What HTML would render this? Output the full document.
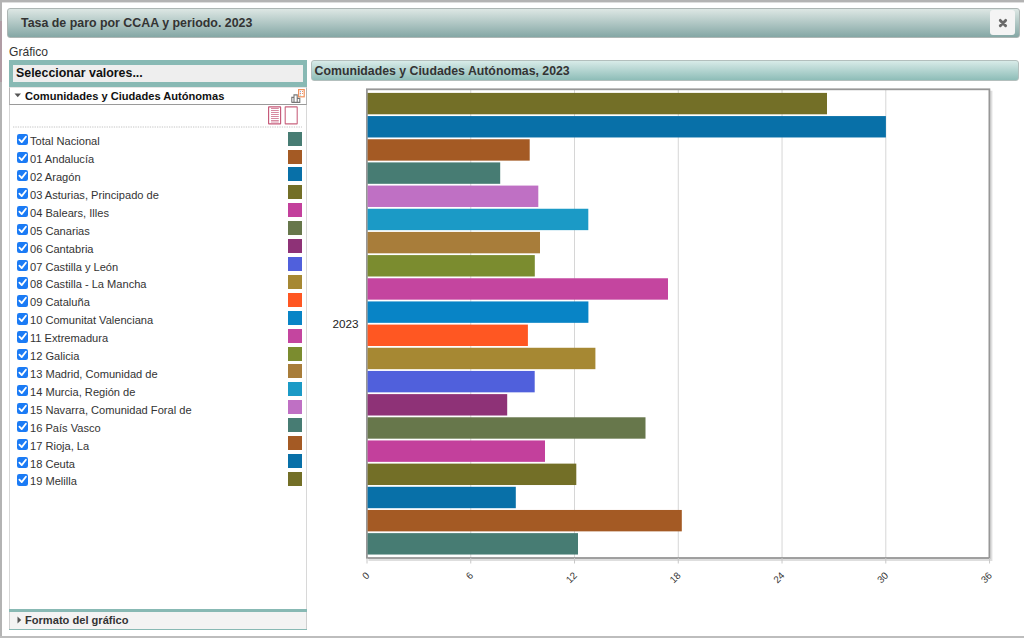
<!DOCTYPE html>
<html><head><meta charset="utf-8">
<style>
*{box-sizing:border-box}
html,body{margin:0;padding:0;width:1024px;height:638px;overflow:hidden;background:#fff;font-family:"Liberation Sans",sans-serif;color:#333}
.a{position:absolute}
#frameT{left:0;top:0;width:1024px;height:3px;background:linear-gradient(#b3b3b3 0,#b3b3b3 2px,#dedede 2px)}
#frameL{left:0;top:0;width:2px;height:638px;background:#b3b3b3}
#frameLp{left:0;top:21px;width:2px;height:61px;background:#b09ca4}
#frameB{left:0;top:636px;width:1024px;height:2px;background:#bdbdbd}
#title{left:7px;top:8px;width:1013px;height:30px;border:1px solid #adb6b4;border-radius:3px;background:linear-gradient(#dde7e4,#84a7a5)}
#titleTxt{left:21px;top:15.5px;font-size:12.4px;font-weight:bold;color:#333;white-space:nowrap}
#close{left:990px;top:10px;width:25px;height:25px;background:#f4f4f4;border-radius:3px}
#grafico{left:9px;top:45px;font-size:12.1px;color:#333}
#selBox{left:9px;top:60px;width:298px;height:27px;background:#88b9b4}
#selIn{left:13px;top:65px;width:290px;height:17px;background:#eeeeee}
#selTxt{left:16px;top:66px;font-size:12.4px;font-weight:bold;color:#111}
#panel{left:9px;top:87px;width:298px;height:522px;border-left:1px solid #d8d8d8;border-right:1px solid #d8d8d8}
#hdr{left:9px;top:87px;width:298px;height:18px;border:1px solid #b5b5b5;border-top-color:#e6e6e6;border-bottom:1.5px solid #9a9a9a}
#hdrTxt{left:25px;top:90px;font-size:11.1px;font-weight:bold;color:#111;white-space:nowrap}
#dots{left:13px;top:126px;width:289px;height:1px;border-top:1px dotted #aaa}
.row{position:absolute;left:17px;height:18px;font-size:11.1px;color:#333;white-space:nowrap}
.cb{position:absolute;left:0;top:0;width:11.3px;height:11.3px;border-radius:2.2px;background:#1b7bf5}
.cb svg{position:absolute;left:0;top:0}
.lbl{position:absolute;left:13px;top:1px}
.sw{position:absolute;left:288px;width:14px;height:14px}
#fmtTop{left:9px;top:609px;width:298px;height:3px;background:#88b9b4}
#fmt{left:9px;top:612px;width:298px;height:17px;background:#f3f3f3;border-left:1px solid #cfcfcf;border-right:1px solid #cfcfcf}
#fmtBot{left:9px;top:629px;width:298px;height:1.3px;background:#88b9b4}
#fmtTxt{left:25px;top:614px;font-size:11.1px;font-weight:bold;color:#333;white-space:nowrap}
#ctitle{left:311px;top:60px;width:708px;height:21px;border:1px solid #b3bfbd;border-radius:3px;background:linear-gradient(#d8ebe8,#8ebdb8)}
#ctitleTxt{left:314.6px;top:64px;font-size:12.3px;font-weight:bold;color:#333;white-space:nowrap}
.xl{font-size:9.5px;color:#333;text-align:right;transform:rotate(-45deg);transform-origin:100% 0}
</style></head><body>
<div class="a" id="frameT"></div>
<div class="a" id="frameL"></div>
<div class="a" id="frameLp"></div>
<div class="a" id="frameB"></div>

<div class="a" id="title"></div>
<div class="a" id="titleTxt">Tasa de paro por CCAA y periodo. 2023</div>
<div class="a" id="close"><svg width="25" height="25"><path d="M10.3 10.4L15.6 15.8M15.6 10.4L10.3 15.8" stroke="#6a6a6a" stroke-width="2.9" stroke-linecap="round"/></svg></div>

<div class="a" id="grafico">Gráfico</div>

<div class="a" id="selBox"></div>
<div class="a" id="selIn"></div>
<div class="a" id="selTxt">Seleccionar valores...</div>

<div class="a" id="panel"></div>
<div class="a" id="hdr"></div>
<svg class="a" style="left:14px;top:93px" width="8" height="5"><path d="M0.5 0.5H7L3.75 4.2Z" fill="#555"/></svg>
<div class="a" id="hdrTxt">Comunidades y Ciudades Autónomas</div>

<svg class="a" style="left:13px;top:126px" width="290" height="2"><line x1="0" y1="1" x2="289" y2="1" stroke="#c4c4c4" stroke-width="1" stroke-dasharray="1.3 1.1"/></svg>

<div class="row" style="top:134.20px"><div class="cb"><svg width="11" height="11"><path d="M2.4 5.7L4.7 8.1L8.9 2.7" stroke="#fff" stroke-width="1.8" fill="none" stroke-linecap="round" stroke-linejoin="round"/></svg></div><span class="lbl">Total Nacional</span></div>
<div class="sw" style="top:131.60px;background:#477c73"></div>
<div class="row" style="top:152.11px"><div class="cb"><svg width="11" height="11"><path d="M2.4 5.7L4.7 8.1L8.9 2.7" stroke="#fff" stroke-width="1.8" fill="none" stroke-linecap="round" stroke-linejoin="round"/></svg></div><span class="lbl">01 Andalucía</span></div>
<div class="sw" style="top:149.51px;background:#a45a24"></div>
<div class="row" style="top:170.02px"><div class="cb"><svg width="11" height="11"><path d="M2.4 5.7L4.7 8.1L8.9 2.7" stroke="#fff" stroke-width="1.8" fill="none" stroke-linecap="round" stroke-linejoin="round"/></svg></div><span class="lbl">02 Aragón</span></div>
<div class="sw" style="top:167.42px;background:#0870a8"></div>
<div class="row" style="top:187.93px"><div class="cb"><svg width="11" height="11"><path d="M2.4 5.7L4.7 8.1L8.9 2.7" stroke="#fff" stroke-width="1.8" fill="none" stroke-linecap="round" stroke-linejoin="round"/></svg></div><span class="lbl">03 Asturias, Principado de</span></div>
<div class="sw" style="top:185.33px;background:#736f27"></div>
<div class="row" style="top:205.84px"><div class="cb"><svg width="11" height="11"><path d="M2.4 5.7L4.7 8.1L8.9 2.7" stroke="#fff" stroke-width="1.8" fill="none" stroke-linecap="round" stroke-linejoin="round"/></svg></div><span class="lbl">04 Balears, Illes</span></div>
<div class="sw" style="top:203.24px;background:#c3409c"></div>
<div class="row" style="top:223.75px"><div class="cb"><svg width="11" height="11"><path d="M2.4 5.7L4.7 8.1L8.9 2.7" stroke="#fff" stroke-width="1.8" fill="none" stroke-linecap="round" stroke-linejoin="round"/></svg></div><span class="lbl">05 Canarias</span></div>
<div class="sw" style="top:221.15px;background:#67774b"></div>
<div class="row" style="top:241.66px"><div class="cb"><svg width="11" height="11"><path d="M2.4 5.7L4.7 8.1L8.9 2.7" stroke="#fff" stroke-width="1.8" fill="none" stroke-linecap="round" stroke-linejoin="round"/></svg></div><span class="lbl">06 Cantabria</span></div>
<div class="sw" style="top:239.06px;background:#8e3277"></div>
<div class="row" style="top:259.57px"><div class="cb"><svg width="11" height="11"><path d="M2.4 5.7L4.7 8.1L8.9 2.7" stroke="#fff" stroke-width="1.8" fill="none" stroke-linecap="round" stroke-linejoin="round"/></svg></div><span class="lbl">07 Castilla y León</span></div>
<div class="sw" style="top:256.97px;background:#5060dc"></div>
<div class="row" style="top:277.48px"><div class="cb"><svg width="11" height="11"><path d="M2.4 5.7L4.7 8.1L8.9 2.7" stroke="#fff" stroke-width="1.8" fill="none" stroke-linecap="round" stroke-linejoin="round"/></svg></div><span class="lbl">08 Castilla - La Mancha</span></div>
<div class="sw" style="top:274.88px;background:#a68833"></div>
<div class="row" style="top:295.39px"><div class="cb"><svg width="11" height="11"><path d="M2.4 5.7L4.7 8.1L8.9 2.7" stroke="#fff" stroke-width="1.8" fill="none" stroke-linecap="round" stroke-linejoin="round"/></svg></div><span class="lbl">09 Cataluña</span></div>
<div class="sw" style="top:292.79px;background:#ff5722"></div>
<div class="row" style="top:313.30px"><div class="cb"><svg width="11" height="11"><path d="M2.4 5.7L4.7 8.1L8.9 2.7" stroke="#fff" stroke-width="1.8" fill="none" stroke-linecap="round" stroke-linejoin="round"/></svg></div><span class="lbl">10 Comunitat Valenciana</span></div>
<div class="sw" style="top:310.70px;background:#0884c6"></div>
<div class="row" style="top:331.21px"><div class="cb"><svg width="11" height="11"><path d="M2.4 5.7L4.7 8.1L8.9 2.7" stroke="#fff" stroke-width="1.8" fill="none" stroke-linecap="round" stroke-linejoin="round"/></svg></div><span class="lbl">11 Extremadura</span></div>
<div class="sw" style="top:328.61px;background:#c4459f"></div>
<div class="row" style="top:349.12px"><div class="cb"><svg width="11" height="11"><path d="M2.4 5.7L4.7 8.1L8.9 2.7" stroke="#fff" stroke-width="1.8" fill="none" stroke-linecap="round" stroke-linejoin="round"/></svg></div><span class="lbl">12 Galicia</span></div>
<div class="sw" style="top:346.52px;background:#7b8c2f"></div>
<div class="row" style="top:367.03px"><div class="cb"><svg width="11" height="11"><path d="M2.4 5.7L4.7 8.1L8.9 2.7" stroke="#fff" stroke-width="1.8" fill="none" stroke-linecap="round" stroke-linejoin="round"/></svg></div><span class="lbl">13 Madrid, Comunidad de</span></div>
<div class="sw" style="top:364.43px;background:#a87d3a"></div>
<div class="row" style="top:384.94px"><div class="cb"><svg width="11" height="11"><path d="M2.4 5.7L4.7 8.1L8.9 2.7" stroke="#fff" stroke-width="1.8" fill="none" stroke-linecap="round" stroke-linejoin="round"/></svg></div><span class="lbl">14 Murcia, Región de</span></div>
<div class="sw" style="top:382.34px;background:#1b9ac6"></div>
<div class="row" style="top:402.85px"><div class="cb"><svg width="11" height="11"><path d="M2.4 5.7L4.7 8.1L8.9 2.7" stroke="#fff" stroke-width="1.8" fill="none" stroke-linecap="round" stroke-linejoin="round"/></svg></div><span class="lbl">15 Navarra, Comunidad Foral de</span></div>
<div class="sw" style="top:400.25px;background:#bf70c4"></div>
<div class="row" style="top:420.76px"><div class="cb"><svg width="11" height="11"><path d="M2.4 5.7L4.7 8.1L8.9 2.7" stroke="#fff" stroke-width="1.8" fill="none" stroke-linecap="round" stroke-linejoin="round"/></svg></div><span class="lbl">16 País Vasco</span></div>
<div class="sw" style="top:418.16px;background:#477c73"></div>
<div class="row" style="top:438.67px"><div class="cb"><svg width="11" height="11"><path d="M2.4 5.7L4.7 8.1L8.9 2.7" stroke="#fff" stroke-width="1.8" fill="none" stroke-linecap="round" stroke-linejoin="round"/></svg></div><span class="lbl">17 Rioja, La</span></div>
<div class="sw" style="top:436.07px;background:#a45a24"></div>
<div class="row" style="top:456.58px"><div class="cb"><svg width="11" height="11"><path d="M2.4 5.7L4.7 8.1L8.9 2.7" stroke="#fff" stroke-width="1.8" fill="none" stroke-linecap="round" stroke-linejoin="round"/></svg></div><span class="lbl">18 Ceuta</span></div>
<div class="sw" style="top:453.98px;background:#0870a8"></div>
<div class="row" style="top:474.49px"><div class="cb"><svg width="11" height="11"><path d="M2.4 5.7L4.7 8.1L8.9 2.7" stroke="#fff" stroke-width="1.8" fill="none" stroke-linecap="round" stroke-linejoin="round"/></svg></div><span class="lbl">19 Melilla</span></div>
<div class="sw" style="top:471.89px;background:#736f27"></div>
<svg class="a" style="left:288px;top:87px" width="20" height="18">
<path d="M3.8 15.4V10.4H6M6 15.4V7.9H9.2V15.4M9.2 11.4H11.8V15.4H3.6" stroke="#777" stroke-width="1.1" fill="none"/>
<rect x="10.6" y="2.6" width="5.6" height="7.2" fill="#fff" stroke="#f0915c" stroke-width="1.2"/>
<circle cx="12.4" cy="4.6" r="0.6" fill="#6a9fd8"/><circle cx="12.4" cy="6.4" r="0.6" fill="#e07a7a"/><circle cx="12.4" cy="8.1" r="0.6" fill="#8fd0c8"/>
<rect x="14" y="4" width="1" height="1" fill="#f0915c"/><rect x="14" y="6" width="1" height="1" fill="#f0915c"/>
</svg>
<svg class="a" style="left:266px;top:105px" width="34" height="21">
<rect x="2.6" y="1.9" width="12" height="17" rx="0.3" fill="#fff" stroke="#c55878" stroke-width="1.15"/>
<path d="M5 3.5H12.8M5 5.5H12.8M5 7.5H12.8M5 9.5H12.8M5 11.5H12.8M5 13.5H12.8M5 15.5H12.8M5 17H12.8" stroke="#d27d96" stroke-width="0.9"/>
<rect x="19.2" y="1.9" width="12" height="17" rx="0.3" fill="#fff" stroke="#c9647f" stroke-width="1.1"/>
</svg>

<div class="a" id="fmtTop"></div>
<div class="a" id="fmt"></div>
<div class="a" id="fmtBot"></div>
<svg class="a" style="left:17px;top:616px" width="5" height="8"><path d="M0.5 0.5V7.5L4.2 4Z" fill="#555"/></svg>
<div class="a" id="fmtTxt">Formato del gráfico</div>

<div class="a" id="ctitle"></div>
<div class="a" id="ctitleTxt">Comunidades y Ciudades Autónomas, 2023</div>

<svg class="a" style="left:0;top:0" width="1024" height="638">
<path d="M368.4 559.5H990.9V90.8" stroke="rgba(0,0,0,0.13)" stroke-width="3" fill="none"/>
<line x1="470.76" y1="89.3" x2="470.76" y2="558.0" stroke="#d6d6d6" stroke-width="1"/>
<line x1="574.52" y1="89.3" x2="574.52" y2="558.0" stroke="#d6d6d6" stroke-width="1"/>
<line x1="678.28" y1="89.3" x2="678.28" y2="558.0" stroke="#d6d6d6" stroke-width="1"/>
<line x1="782.04" y1="89.3" x2="782.04" y2="558.0" stroke="#d6d6d6" stroke-width="1"/>
<line x1="885.80" y1="89.3" x2="885.80" y2="558.0" stroke="#d6d6d6" stroke-width="1"/>
<rect x="366.9" y="89.3" width="622.50" height="468.70" fill="none" stroke="#979797" stroke-width="1.8"/>
<rect x="367.6" y="92.90" width="459.40" height="21.4" fill="#736f27"/>
<rect x="367.6" y="116.07" width="518.30" height="21.4" fill="#0870a8"/>
<rect x="367.6" y="139.24" width="162.10" height="21.4" fill="#a45a24"/>
<rect x="367.6" y="162.41" width="132.60" height="21.4" fill="#477c73"/>
<rect x="367.6" y="185.58" width="170.70" height="21.4" fill="#bf70c4"/>
<rect x="367.6" y="208.75" width="220.70" height="21.4" fill="#1b9ac6"/>
<rect x="367.6" y="231.92" width="172.40" height="21.4" fill="#a87d3a"/>
<rect x="367.6" y="255.09" width="167.20" height="21.4" fill="#7b8c2f"/>
<rect x="367.6" y="278.26" width="300.40" height="21.4" fill="#c4459f"/>
<rect x="367.6" y="301.43" width="220.80" height="21.4" fill="#0884c6"/>
<rect x="367.6" y="324.60" width="160.30" height="21.4" fill="#ff5722"/>
<rect x="367.6" y="347.77" width="227.80" height="21.4" fill="#a68833"/>
<rect x="367.6" y="370.94" width="167.10" height="21.4" fill="#5060dc"/>
<rect x="367.6" y="394.11" width="139.60" height="21.4" fill="#8e3277"/>
<rect x="367.6" y="417.28" width="277.90" height="21.4" fill="#67774b"/>
<rect x="367.6" y="440.45" width="177.40" height="21.4" fill="#c3409c"/>
<rect x="367.6" y="463.62" width="208.70" height="21.4" fill="#736f27"/>
<rect x="367.6" y="486.79" width="148.20" height="21.4" fill="#0870a8"/>
<rect x="367.6" y="509.96" width="314.20" height="21.4" fill="#a45a24"/>
<rect x="367.6" y="533.13" width="210.40" height="21.4" fill="#477c73"/>
<line x1="367.00" y1="558.0" x2="367.00" y2="563.5" stroke="#c8c8c8" stroke-width="1"/>
<text transform="translate(367.60,573.6) rotate(-45)" text-anchor="end" dominant-baseline="central" font-family="Liberation Sans" font-size="9.8" fill="#333">0</text>
<line x1="470.76" y1="558.0" x2="470.76" y2="563.5" stroke="#c8c8c8" stroke-width="1"/>
<text transform="translate(471.36,573.6) rotate(-45)" text-anchor="end" dominant-baseline="central" font-family="Liberation Sans" font-size="9.8" fill="#333">6</text>
<line x1="574.52" y1="558.0" x2="574.52" y2="563.5" stroke="#c8c8c8" stroke-width="1"/>
<text transform="translate(575.12,573.6) rotate(-45)" text-anchor="end" dominant-baseline="central" font-family="Liberation Sans" font-size="9.8" fill="#333">12</text>
<line x1="678.28" y1="558.0" x2="678.28" y2="563.5" stroke="#c8c8c8" stroke-width="1"/>
<text transform="translate(678.88,573.6) rotate(-45)" text-anchor="end" dominant-baseline="central" font-family="Liberation Sans" font-size="9.8" fill="#333">18</text>
<line x1="782.04" y1="558.0" x2="782.04" y2="563.5" stroke="#c8c8c8" stroke-width="1"/>
<text transform="translate(782.64,573.6) rotate(-45)" text-anchor="end" dominant-baseline="central" font-family="Liberation Sans" font-size="9.8" fill="#333">24</text>
<line x1="885.80" y1="558.0" x2="885.80" y2="563.5" stroke="#c8c8c8" stroke-width="1"/>
<text transform="translate(886.40,573.6) rotate(-45)" text-anchor="end" dominant-baseline="central" font-family="Liberation Sans" font-size="9.8" fill="#333">30</text>
<line x1="989.56" y1="558.0" x2="989.56" y2="563.5" stroke="#c8c8c8" stroke-width="1"/>
<text transform="translate(990.16,573.6) rotate(-45)" text-anchor="end" dominant-baseline="central" font-family="Liberation Sans" font-size="9.8" fill="#333">36</text>
</svg>
<div class="a" style="left:332.5px;top:317.3px;font-size:11.7px;color:#222">2023</div>
</body></html>
